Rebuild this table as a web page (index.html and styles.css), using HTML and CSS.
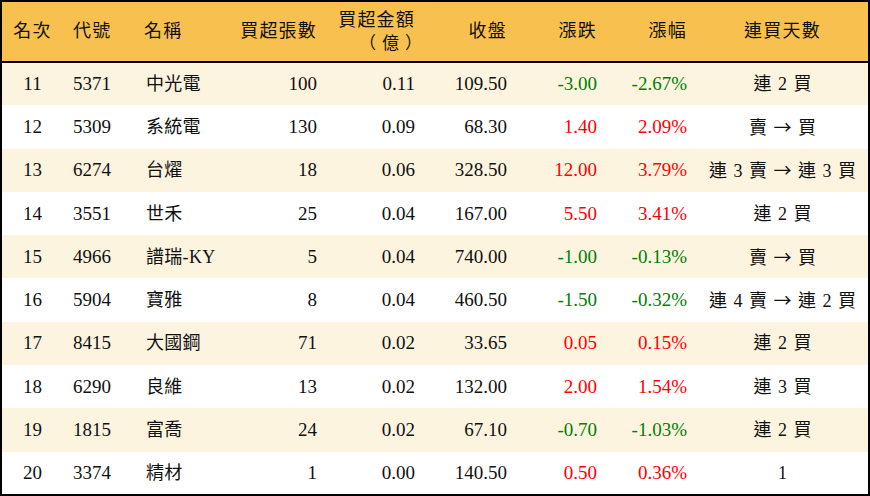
FILE: index.html
```html
<!DOCTYPE html>
<html lang="zh-Hant">
<head>
<meta charset="utf-8">
<link rel="stylesheet" href="styles.css">
</head>
<body>
<table class="rank">
  <colgroup>
    <col class="c1"><col class="c2"><col class="c3"><col class="c4"><col class="c5"><col class="c6"><col class="c7"><col class="c8"><col class="c9">
  </colgroup>
  <thead>
    <tr>
      <th class="ctr">名次</th>
      <th class="lft">代號</th>
      <th class="lft">名稱</th>
      <th class="rgt">買超張數</th>
      <th class="rgt amt">買超金額<br><span class="unit">（億）</span></th>
      <th class="rgt">收盤</th>
      <th class="rgt">漲跌</th>
      <th class="rgt">漲幅</th>
      <th class="ctr">連買天數</th>
    </tr>
  </thead>
  <tbody>
    <tr><td class="ctr">11</td><td class="lft">5371</td><td class="lft nm">中光電</td><td class="rgt">100</td><td class="rgt">0.11</td><td class="rgt">109.50</td><td class="rgt dn">-3.00</td><td class="rgt dn">-2.67%</td><td class="ctr days">連 2 買</td></tr>
    <tr><td class="ctr">12</td><td class="lft">5309</td><td class="lft nm">系統電</td><td class="rgt">130</td><td class="rgt">0.09</td><td class="rgt">68.30</td><td class="rgt up">1.40</td><td class="rgt up">2.09%</td><td class="ctr days">賣 <span class="arr">→</span> 買</td></tr>
    <tr><td class="ctr">13</td><td class="lft">6274</td><td class="lft nm">台燿</td><td class="rgt">18</td><td class="rgt">0.06</td><td class="rgt">328.50</td><td class="rgt up">12.00</td><td class="rgt up">3.79%</td><td class="ctr days">連 3 賣 <span class="arr">→</span> 連 3 買</td></tr>
    <tr><td class="ctr">14</td><td class="lft">3551</td><td class="lft nm">世禾</td><td class="rgt">25</td><td class="rgt">0.04</td><td class="rgt">167.00</td><td class="rgt up">5.50</td><td class="rgt up">3.41%</td><td class="ctr days">連 2 買</td></tr>
    <tr><td class="ctr">15</td><td class="lft">4966</td><td class="lft nm">譜瑞-KY</td><td class="rgt">5</td><td class="rgt">0.04</td><td class="rgt">740.00</td><td class="rgt dn">-1.00</td><td class="rgt dn">-0.13%</td><td class="ctr days">賣 <span class="arr">→</span> 買</td></tr>
    <tr><td class="ctr">16</td><td class="lft">5904</td><td class="lft nm">寶雅</td><td class="rgt">8</td><td class="rgt">0.04</td><td class="rgt">460.50</td><td class="rgt dn">-1.50</td><td class="rgt dn">-0.32%</td><td class="ctr days">連 4 賣 <span class="arr">→</span> 連 2 買</td></tr>
    <tr><td class="ctr">17</td><td class="lft">8415</td><td class="lft nm">大國鋼</td><td class="rgt">71</td><td class="rgt">0.02</td><td class="rgt">33.65</td><td class="rgt up">0.05</td><td class="rgt up">0.15%</td><td class="ctr days">連 2 買</td></tr>
    <tr><td class="ctr">18</td><td class="lft">6290</td><td class="lft nm">良維</td><td class="rgt">13</td><td class="rgt">0.02</td><td class="rgt">132.00</td><td class="rgt up">2.00</td><td class="rgt up">1.54%</td><td class="ctr days">連 3 買</td></tr>
    <tr><td class="ctr">19</td><td class="lft">1815</td><td class="lft nm">富喬</td><td class="rgt">24</td><td class="rgt">0.02</td><td class="rgt">67.10</td><td class="rgt dn">-0.70</td><td class="rgt dn">-1.03%</td><td class="ctr days">連 2 買</td></tr>
    <tr><td class="ctr">20</td><td class="lft">3374</td><td class="lft nm">精材</td><td class="rgt">1</td><td class="rgt">0.00</td><td class="rgt">140.50</td><td class="rgt up">0.50</td><td class="rgt up">0.36%</td><td class="ctr days">1</td></tr>
  </tbody>
</table>
</body>
</html>
```

FILE: styles.css
```css
html, body {
  margin: 0;
  padding: 0;
  background: #ffffff;
}

.rank {
  width: 870px;
  height: 496px;
  border-collapse: collapse;
  table-layout: fixed;
  border: 2px solid #000;
  font-family: "Liberation Serif", "Noto Sans CJK TC", serif;
  font-size: 18px;
  color: #111;
}

.c1 { width: 62px; }
.c2 { width: 71px; }
.c3 { width: 95px; }
.c4 { width: 98px; }
.c5 { width: 98px; }
.c6 { width: 92px; }
.c7 { width: 90px; }
.c8 { width: 90px; }
.c9 { width: auto; }

.rank thead tr {
  background: #f8c14f;
  height: 61px;
  border-bottom: 2px solid #000;
}

.rank th {
  font-weight: normal;
  letter-spacing: 1.2px;
  line-height: 19px;
  padding: 0;
}

.rank th.amt {
  line-height: 21px;
  padding-top: 0;
  padding-right: 8px;
}

.unit {
  display: inline-block;
  font-family: "Noto Sans CJK TC", sans-serif;
  font-size: 17px;
  width: 62px;
  text-align: center;
  letter-spacing: 6px;
  text-indent: 6px;
  margin-right: 0;
}

.rank tbody tr {
  height: 43px;
}

.rank tbody tr:nth-child(odd) {
  background: #fdf4e0;
}

.rank td {
  padding: 0;
  white-space: nowrap;
  line-height: 20px;
  font-size: 19px;
}

.rank td.nm {
  font-size: 18px;
  letter-spacing: 0.3px;
  padding-left: 12px !important;
}

.rank td.days {
  font-size: 18px;
  word-spacing: 2px;
}

.arr {
  font-family: "Noto Sans CJK TC", sans-serif;
}

.ctr { text-align: center; }
.lft { text-align: left; padding-left: 10px !important; }
.rgt { text-align: right; padding-right: 10px !important; }

.up { color: #ff0000; }
.dn { color: #008000; }
```
